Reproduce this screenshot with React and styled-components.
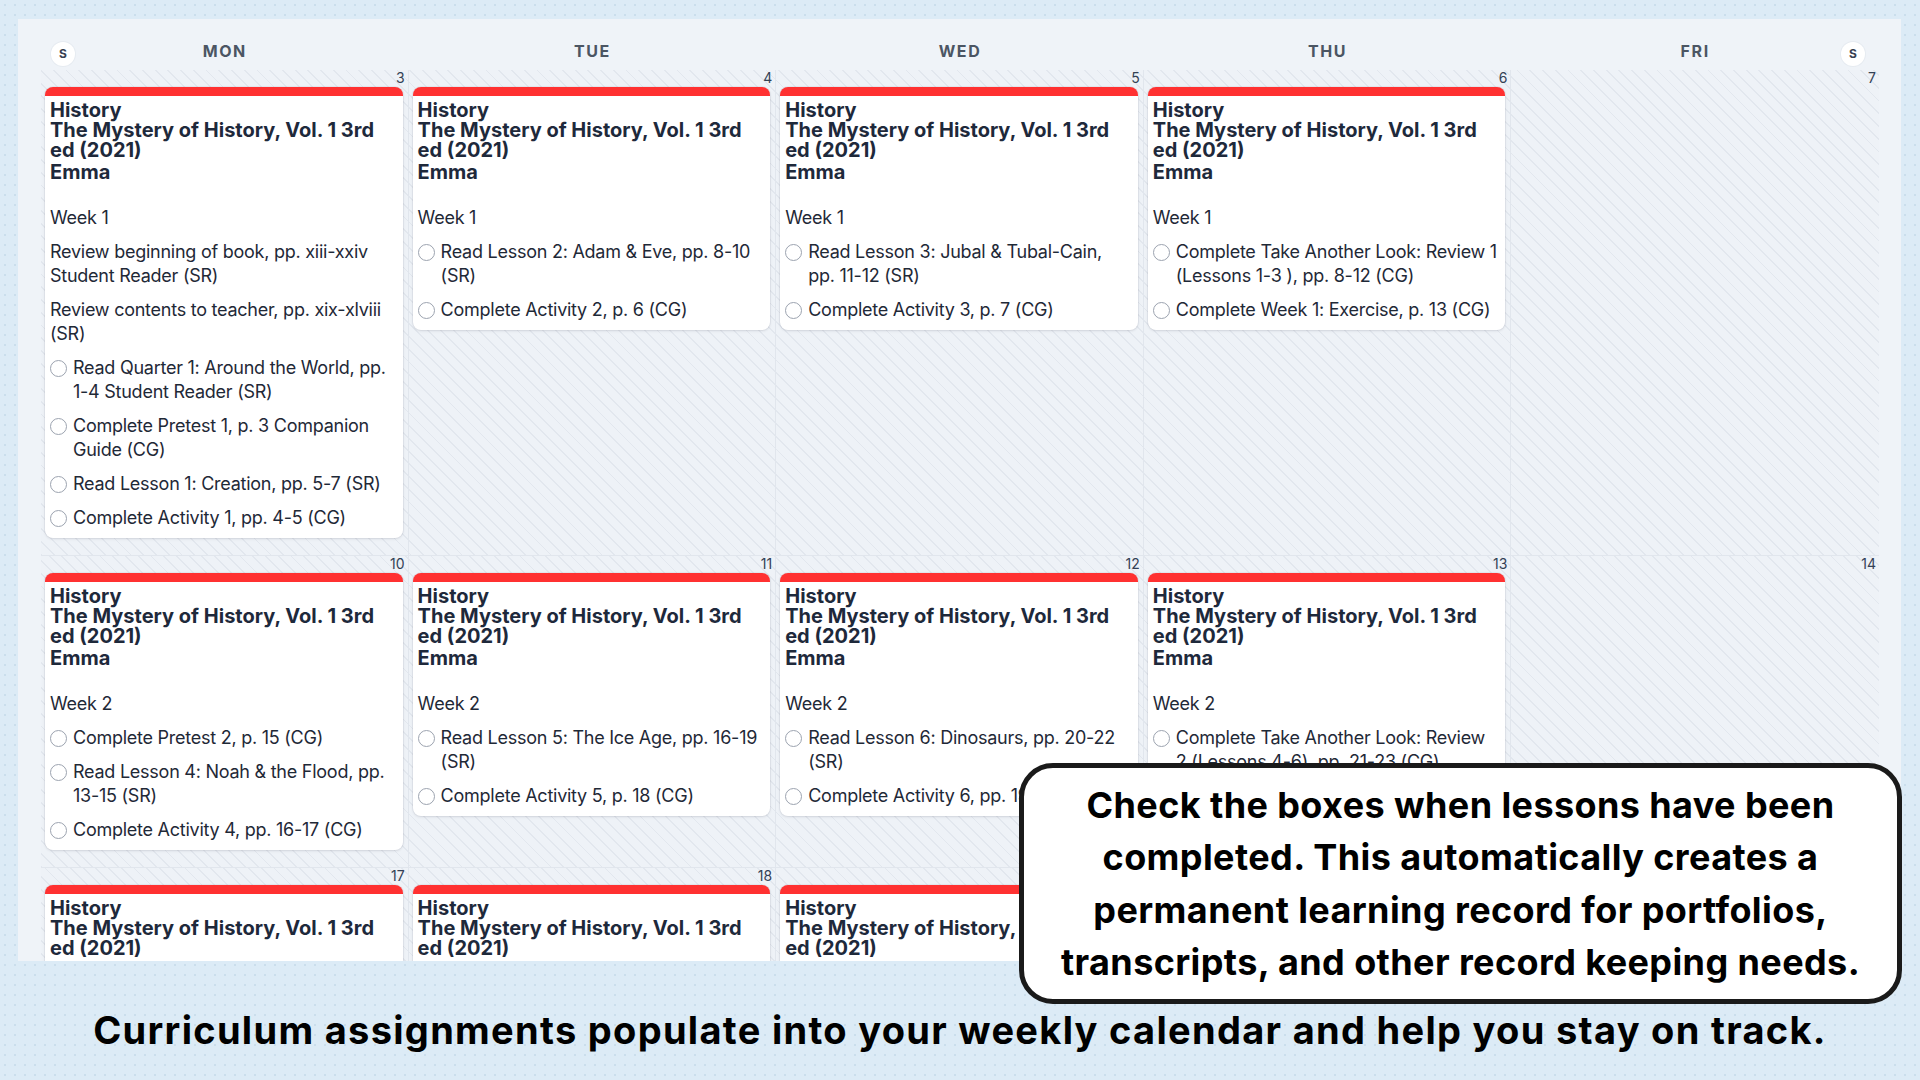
import styled, { createGlobalStyle } from "styled-components";

const GlobalStyle = createGlobalStyle`
  html, body {
    margin: 0;
    padding: 0;
  }
  body {
    font-family: Inter, "Noto Sans", sans-serif;
    color: #1e293b;
  }
  * {
    box-sizing: border-box;
  }
`;

const Page = styled.div`
  position: relative;
  width: 1920px;
  height: 1080px;
  overflow: hidden;
  background-color: #dcebf6;
  background-image: radial-gradient(#cadeec 0.8px, transparent 1.2px);
  background-size: 10px 10px;
  display: flex;
  flex-direction: column;
  align-items: center;
`;

const Panel = styled.section`
  width: 1883px;
  height: 942px;
  margin: 19px 19px 0 18px;
  padding: 0 22px 0 23px;
  background: #eff3f8;
  overflow: hidden;
  align-self: flex-start;
`;

const DayHeader = styled.div`
  display: grid;
  grid-template-columns: repeat(5, 1fr);
  height: 51px;
`;

const DayName = styled.div`
  position: relative;
  padding-top: 22px;
  text-align: center;
  font-size: 16px;
  line-height: 20px;
  font-weight: 700;
  letter-spacing: 1.6px;
  color: #4b5563;
`;

const WeekendToggle = styled.span`
  position: absolute;
  top: 23px;
  ${({ $side }) => ($side === "left" ? "left: 10px;" : "right: 14px;")}
  width: 24px;
  height: 24px;
  border-radius: 50%;
  background: #fff;
  box-shadow: 0 0 0 1px #e6ebf1;
  font-size: 12px;
  line-height: 24px;
  font-weight: 700;
  letter-spacing: 0;
  color: #374151;
  text-align: center;
`;

const WeekRow = styled.div`
  display: grid;
  grid-template-columns: repeat(5, 1fr);
  border-top: ${({ $first }) => ($first ? "none" : "1px solid #e1e6ed")};
  background-color: #eef2f7;
  background-image: repeating-linear-gradient(
    45deg,
    #e2e7ee 0 1.3px,
    transparent 1.3px 9px
  );
`;

const DayCell = styled.div`
  display: flex;
  flex-direction: column;
  padding: 0 5px 17px 4px;
  border-right: ${({ $last }) => ($last ? "none" : "1px solid #e1e6ed")};
  min-height: 94px;
`;

const DateNum = styled.div`
  height: 17px;
  margin-right: -2px;
  text-align: right;
  font-size: 14px;
  line-height: 15px;
  color: #334155;
`;

const Card = styled.article`
  background: #fff;
  border-top: 9px solid #ff3131;
  border-radius: 8px;
  padding: 4px 5px 8px 5px;
  box-shadow: 0 1px 3px rgba(15, 23, 42, 0.1), 0 0 0 1px rgba(15, 23, 42, 0.04);
`;

const Course = styled.div`
  font-size: 20px;
  line-height: 20px;
  font-weight: 700;
  color: #1e293b;
`;

const Student = styled.div`
  font-size: 20px;
  line-height: 24px;
  font-weight: 700;
  color: #1e293b;
  margin-bottom: 22px;
`;

const ItemList = styled.div`
  display: flex;
  flex-direction: column;
  gap: 10px;
`;

const WeekLabel = styled.div`
  font-size: 18px;
  line-height: 24px;
  letter-spacing: -0.25px;
  color: #1f2937;
`;

const Item = styled.div`
  display: flex;
  align-items: flex-start;
  gap: 6px;
  font-size: 18px;
  line-height: 24px;
  letter-spacing: -0.25px;
  color: #1f2937;
`;

const Check = styled.span`
  flex: none;
  width: 17px;
  height: 17px;
  margin-top: 4px;
  border-radius: 50%;
  border: 1.5px solid #9ca3af;
  background: #fff;
`;

const Callout = styled.div`
  position: absolute;
  left: 1019px;
  top: 763px;
  width: 883px;
  height: 241px;
  border: 5px solid #1a1a1a;
  border-radius: 34px;
  background: #fff;
  display: flex;
  align-items: center;
  justify-content: center;
  text-align: center;
  font-size: 36px;
  line-height: 52.5px;
  font-weight: 700;
  letter-spacing: 0.4px;
  color: #000;
`;

const Caption = styled.p`
  margin: 50px 0 0;
  font-size: 38px;
  line-height: 38px;
  font-weight: 700;
  letter-spacing: 1.3px;
  color: #000;
  text-align: center;
  white-space: nowrap;
`;

const days = ["MON", "TUE", "WED", "THU", "FRI"];

const weeks = [
  {
    dates: [3, 4, 5, 6, 7],
    cards: [
      {
        week: "Week 1",
        items: [
          { text: "Review beginning of book, pp. xiii-xxiv Student Reader (SR)" },
          { text: "Review contents to teacher, pp. xix-xlviii (SR)" },
          { text: "Read Quarter 1: Around the World, pp. 1-4 Student Reader (SR)", task: true },
          { text: "Complete Pretest 1, p. 3 Companion Guide (CG)", task: true },
          { text: "Read Lesson 1: Creation, pp. 5-7 (SR)", task: true },
          { text: "Complete Activity 1, pp. 4-5 (CG)", task: true },
        ],
      },
      {
        week: "Week 1",
        items: [
          { text: "Read Lesson 2: Adam & Eve, pp. 8-10 (SR)", task: true },
          { text: "Complete Activity 2, p. 6 (CG)", task: true },
        ],
      },
      {
        week: "Week 1",
        items: [
          { text: "Read Lesson 3: Jubal & Tubal-Cain, pp. 11-12 (SR)", task: true },
          { text: "Complete Activity 3, p. 7 (CG)", task: true },
        ],
      },
      {
        week: "Week 1",
        items: [
          { text: "Complete Take Another Look: Review 1 (Lessons 1-3 ), pp. 8-12 (CG)", task: true },
          { text: "Complete Week 1: Exercise, p. 13 (CG)", task: true },
        ],
      },
      null,
    ],
  },
  {
    dates: [10, 11, 12, 13, 14],
    cards: [
      {
        week: "Week 2",
        items: [
          { text: "Complete Pretest 2, p. 15 (CG)", task: true },
          { text: "Read Lesson 4: Noah & the Flood, pp. 13-15 (SR)", task: true },
          { text: "Complete Activity 4, pp. 16-17 (CG)", task: true },
        ],
      },
      {
        week: "Week 2",
        items: [
          { text: "Read Lesson 5: The Ice Age, pp. 16-19 (SR)", task: true },
          { text: "Complete Activity 5, p. 18 (CG)", task: true },
        ],
      },
      {
        week: "Week 2",
        items: [
          { text: "Read Lesson 6: Dinosaurs, pp. 20-22 (SR)", task: true },
          { text: "Complete Activity 6, pp. 19-20 (CG)", task: true },
        ],
      },
      {
        week: "Week 2",
        items: [
          { text: "Complete Take Another Look: Review 2 (Lessons 4-6), pp. 21-23 (CG)", task: true },
          { text: "Complete Week 2: Exercise, p. 24 (CG)", task: true },
        ],
      },
      null,
    ],
  },
  {
    dates: [17, 18, 19, 20, 21],
    cards: [
      {
        week: "Week 3",
        items: [
          { text: "Complete Pretest 3, p. 25 (CG)", task: true },
          { text: "Read Lesson 7: The Tower of Babel, pp. 24-26 (SR)", task: true },
        ],
      },
      {
        week: "Week 3",
        items: [{ text: "Read Lesson 8: Abraham, pp. 27-29 (SR)", task: true }],
      },
      {
        week: "Week 3",
        items: [{ text: "Read Lesson 9: Egypt, pp. 30-33 (SR)", task: true }],
      },
      {
        week: "Week 3",
        items: [{ text: "Complete Activity 9, p. 30 (CG)", task: true }],
      },
      null,
    ],
  },
];

const LessonCard = ({ week, items }) => (
  <Card>
    <Course>History</Course>
    <Course>The Mystery of History, Vol. 1 3rd ed (2021)</Course>
    <Student>Emma</Student>
    <ItemList>
      <WeekLabel>{week}</WeekLabel>
      {items.map((item, i) => (
        <Item key={i}>
          {item.task && <Check />}
          <span>{item.text}</span>
        </Item>
      ))}
    </ItemList>
  </Card>
);

export default function App() {
  return (
    <Page>
      <GlobalStyle />
      <Panel>
        <DayHeader>
          {days.map((d, i) => (
            <DayName key={d}>
              {i === 0 && <WeekendToggle $side="left">S</WeekendToggle>}
              {d}
              {i === days.length - 1 && <WeekendToggle $side="right">S</WeekendToggle>}
            </DayName>
          ))}
        </DayHeader>
        {weeks.map((w, wi) => (
          <WeekRow key={wi} $first={wi === 0}>
            {w.dates.map((date, di) => (
              <DayCell key={date} $last={di === 4}>
                <DateNum>{date}</DateNum>
                {w.cards[di] && <LessonCard {...w.cards[di]} />}
              </DayCell>
            ))}
          </WeekRow>
        ))}
      </Panel>
      <Caption>
        Curriculum assignments populate into your weekly calendar and help you stay on track.
      </Caption>
      <Callout>
        <div>
          Check the boxes when lessons have been
          <br />
          completed. This automatically creates a
          <br />
          permanent learning record for portfolios,
          <br />
          transcripts, and other record keeping needs.
        </div>
      </Callout>
    </Page>
  );
}
